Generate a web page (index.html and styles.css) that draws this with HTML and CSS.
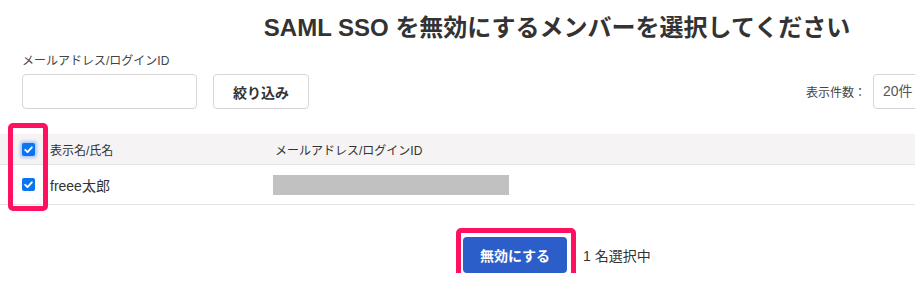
FILE: index.html
```html
<!DOCTYPE html>
<html lang="ja">
<head>
<meta charset="utf-8">
<link rel="stylesheet" href="styles.css">
</head>
<body>
<div class="page">
  <h1 class="title">SAML SSO を無効にするメンバーを選択してください</h1>
  <div class="filter">
    <div class="field">
      <label class="label">メールアドレス/ログインID</label>
      <div class="controls">
        <input class="input" type="text">
        <button class="btn-filter">絞り込み</button>
      </div>
    </div>
    <div class="perpage">
      <span class="perpage-label">表示件数：</span>
      <div class="select">20件</div>
    </div>
  </div>
  <div class="table">
    <div class="hl-check"></div>
    <div class="row head">
      <div class="cell cb"><span class="check focus"><svg viewBox="0 0 13 13"><path d="M3.2 6.8l2.3 2.3 4.3-4.8" fill="none" stroke="#fff" stroke-width="1.9" stroke-linecap="round" stroke-linejoin="round"/></svg></span></div>
      <div class="cell name">表示名/氏名</div>
      <div class="cell mail">メールアドレス/ログインID</div>
    </div>
    <div class="row body">
      <div class="cell cb"><span class="check"><svg viewBox="0 0 13 13"><path d="M3.2 6.8l2.3 2.3 4.3-4.8" fill="none" stroke="#fff" stroke-width="1.9" stroke-linecap="round" stroke-linejoin="round"/></svg></span></div>
      <div class="cell name">freee太郎</div>
      <div class="cell mail"><span class="mask"></span></div>
    </div>
  </div>
  <div class="actions">
    <div class="btn-wrap">
      <button class="btn-primary">無効にする</button>
      <div class="hl-btn"></div>
    </div>
    <span class="count">1 名選択中</span>
  </div>
</div>
</body>
</html>
```

FILE: styles.css
```css
html, body {
  margin: 0;
  padding: 0;
  overflow: hidden;
  background: #fff;
}
body {
  font-family: "Liberation Sans", "Noto Sans CJK JP", sans-serif;
  color: #333;
}
.page {
  width: 1114px;
}
.title {
  margin: 0;
  padding-top: 11px;
  height: 34px;
  font-size: 24px;
  line-height: 34px;
  font-weight: bold;
  text-align: center;
  color: #333;
}
.filter {
  display: flex;
  justify-content: space-between;
  align-items: flex-end;
  padding: 0 22px 0 22px;
  height: 64px;
}
.label {
  display: block;
  font-size: 12px;
  line-height: 16px;
  color: #444;
  height: 21px;
}
.controls {
  display: flex;
  gap: 16px;
}
.input {
  box-sizing: border-box;
  width: 175px;
  height: 35px;
  border: 1px solid #d6d6d6;
  border-radius: 4px;
  margin: 0;
  padding: 0 8px;
}
.btn-filter {
  box-sizing: border-box;
  width: 96px;
  height: 35px;
  border: 1px solid #d6d6d6;
  border-radius: 4px;
  background: #fff;
  font-family: inherit;
  font-size: 14px;
  font-weight: bold;
  color: #333;
  margin: 0;
  padding: 0;
}
.perpage {
  display: flex;
  align-items: center;
  gap: 7px;
}
.perpage-label {
  font-size: 12px;
  color: #444;
}
.select {
  box-sizing: border-box;
  width: 219px;
  height: 35px;
  border: 1px solid #d6d6d6;
  border-radius: 4px;
  padding-left: 9px;
  font-size: 14px;
  line-height: 33px;
  color: #555;
}
.table {
  position: relative;
  margin-top: 25px;
}
.row {
  display: grid;
  grid-template-columns: 50px 225px 1fr;
  align-items: center;
  border-bottom: 1px solid #e3e3e3;
  color: #333;
}
.row.head {
  height: 30px;
  background: #f5f3f3;
  font-size: 12px;
}
.row.body {
  height: 39px;
  font-size: 14px;
}
.cell.cb {
  padding-left: 22px;
  display: flex;
  align-items: center;
}
.check {
  display: block;
  width: 13px;
  height: 13px;
  border-radius: 2px;
  background: #0b74f0;
}
.check.focus {
  box-shadow: 0 0 3px 2px rgba(80, 150, 255, 0.45);
}
.check svg {
  display: block;
  width: 13px;
  height: 13px;
}
.mail .mask {
  display: block;
  width: 236px;
  height: 20px;
  margin-left: -2px;
  background: #c1c1c1;
}
.hl-check {
  position: absolute;
  left: 8px;
  top: -11px;
  width: 40px;
  height: 88px;
  box-sizing: border-box;
  border: 5px solid #ff1060;
  border-radius: 5px;
  z-index: 2;
}
.actions {
  display: flex;
  align-items: center;
  margin-top: 32px;
  padding-left: 463px;
  gap: 16px;
}
.btn-wrap {
  position: relative;
}
.btn-primary {
  display: block;
  box-sizing: border-box;
  width: 104px;
  height: 36px;
  border: none;
  border-radius: 4px;
  background: #2c5ec9;
  color: #fff;
  font-family: inherit;
  font-size: 14px;
  font-weight: bold;
  margin: 0;
  padding: 0;
}
.hl-btn {
  position: absolute;
  left: -7px;
  top: -9px;
  width: 120px;
  height: 55px;
  box-sizing: border-box;
  border: 5px solid #ff1060;
  border-radius: 5px;
}
.count {
  font-size: 14px;
  color: #333;
}
```
